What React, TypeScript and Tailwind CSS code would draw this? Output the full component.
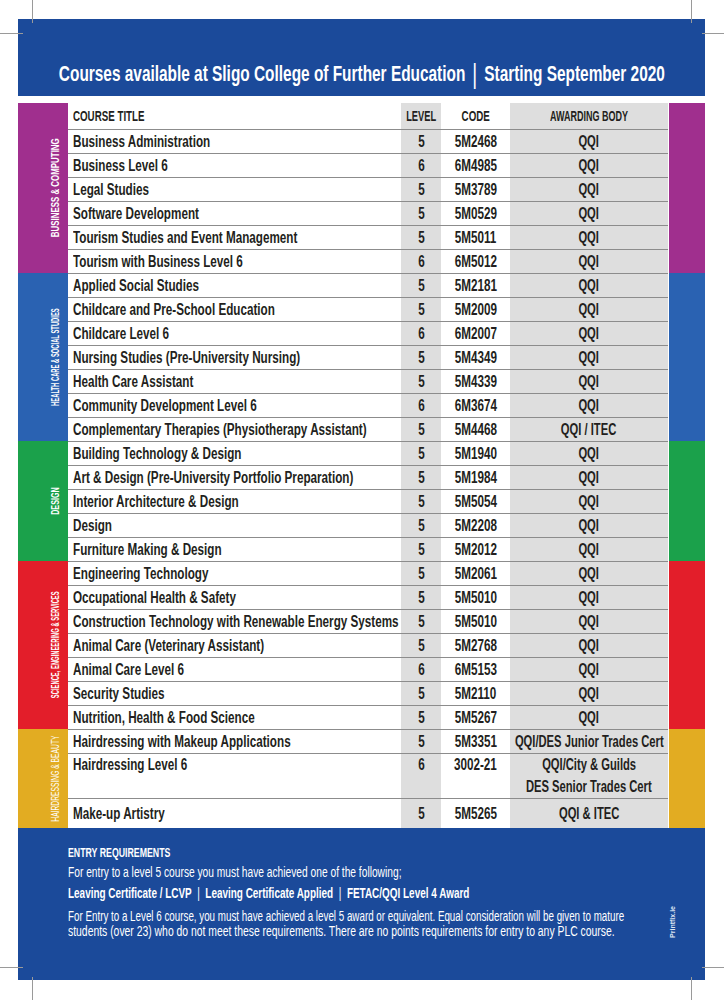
import React from "react";

type Course = {
  title: string;
  level: string;
  code: string;
  body: string[];
  tall?: boolean;
  last?: boolean;
};

type Group = {
  label: string;
  bar: string;
  span: string;
  labelClass: string;
  courses: Course[];
};

const qqi = ["QQI"];

const groups: Group[] = [
  {
    label: "BUSINESS & COMPUTING",
    bar: "bg-[#a02f8e]",
    span: "row-span-7",
    labelClass: "font-bold scale-y-[0.72]",
    courses: [
      { title: "Business Administration", level: "5", code: "5M2468", body: qqi },
      { title: "Business Level 6", level: "6", code: "6M4985", body: qqi },
      { title: "Legal Studies", level: "5", code: "5M3789", body: qqi },
      { title: "Software Development", level: "5", code: "5M0529", body: qqi },
      { title: "Tourism Studies and Event Management", level: "5", code: "5M5011", body: qqi },
      { title: "Tourism with Business Level 6", level: "6", code: "6M5012", body: qqi },
    ],
  },
  {
    label: "HEALTH CARE & SOCIAL STUDIES",
    bar: "bg-[#2a62b2]",
    span: "row-span-7",
    labelClass: "font-bold scale-y-[0.53]",
    courses: [
      { title: "Applied Social Studies", level: "5", code: "5M2181", body: qqi },
      { title: "Childcare and Pre-School Education", level: "5", code: "5M2009", body: qqi },
      { title: "Childcare Level 6", level: "6", code: "6M2007", body: qqi },
      { title: "Nursing Studies (Pre-University Nursing)", level: "5", code: "5M4349", body: qqi },
      { title: "Health Care Assistant", level: "5", code: "5M4339", body: qqi },
      { title: "Community Development Level 6", level: "6", code: "6M3674", body: qqi },
      { title: "Complementary Therapies (Physiotherapy Assistant)", level: "5", code: "5M4468", body: ["QQI / ITEC"] },
    ],
  },
  {
    label: "DESIGN",
    bar: "bg-[#1ba14b]",
    span: "row-span-5",
    labelClass: "font-bold scale-y-[0.65]",
    courses: [
      { title: "Building Technology & Design", level: "5", code: "5M1940", body: qqi },
      { title: "Art & Design (Pre-University Portfolio Preparation)", level: "5", code: "5M1984", body: qqi },
      { title: "Interior Architecture & Design", level: "5", code: "5M5054", body: qqi },
      { title: "Design", level: "5", code: "5M2208", body: qqi },
      { title: "Furniture Making & Design", level: "5", code: "5M2012", body: qqi },
    ],
  },
  {
    label: "SCIENCE, ENGINEERING & SERVICES",
    bar: "bg-[#e31e2a]",
    span: "row-span-7",
    labelClass: "font-bold scale-y-[0.53]",
    courses: [
      { title: "Engineering Technology", level: "5", code: "5M2061", body: qqi },
      { title: "Occupational Health & Safety", level: "5", code: "5M5010", body: qqi },
      { title: "Construction Technology with Renewable Energy Systems", level: "5", code: "5M5010", body: qqi },
      { title: "Animal Care (Veterinary Assistant)", level: "5", code: "5M2768", body: qqi },
      { title: "Animal Care Level 6", level: "6", code: "6M5153", body: qqi },
      { title: "Security Studies", level: "5", code: "5M2110", body: qqi },
      { title: "Nutrition, Health & Food Science", level: "5", code: "5M5267", body: qqi },
    ],
  },
  {
    label: "HAIRDRESSING & BEAUTY",
    bar: "bg-[#e2ac22]",
    span: "row-span-3",
    labelClass: "font-normal scale-y-[0.61] text-[#fbf1d6]",
    courses: [
      { title: "Hairdressing with Makeup Applications", level: "5", code: "5M3351", body: ["QQI/DES Junior Trades Cert"] },
      { title: "Hairdressing Level 6", level: "6", code: "3002-21", body: ["QQI/City & Guilds", "DES Senior Trades Cert"], tall: true },
      { title: "Make-up Artistry", level: "5", code: "5M5265", body: ["QQI & ITEC"], last: true },
    ],
  },
];

const CourseRow = ({ course }: { course: Course }) => {
  const height = course.tall ? "h-[45px]" : course.last ? "h-[30px]" : "h-6";
  const align = course.tall ? "items-start" : "items-center";
  const justify = course.tall ? "justify-start" : "justify-center";
  return (
    <div className={`col-start-2 grid grid-cols-[333px_40px_69px_158px] border-t border-[#8c8c8c] text-[16px] font-bold text-[#231f20] leading-[22px] ${height}`}>
      <div className={`h-full pl-[5px] flex whitespace-nowrap ${align}`}>
        <span className="inline-block origin-left scale-x-[0.73]">{course.title}</span>
      </div>
      <div className={`h-full bg-[#dedede] flex justify-center ${align}`}>
        <span className="inline-block scale-x-[0.73]">{course.level}</span>
      </div>
      <div className={`h-full flex justify-center ${align}`}>
        <span className="inline-block scale-x-[0.73] whitespace-nowrap">{course.code}</span>
      </div>
      <div className={`h-full bg-[#dedede] flex flex-col items-center whitespace-nowrap ${justify}`}>
        {course.body.map((b) => (
          <span key={b} className="inline-block scale-x-[0.7]">
            {b}
          </span>
        ))}
      </div>
    </div>
  );
};

const App = () => {
  return (
    <div className="relative w-[724px] h-[1000px] bg-white pt-[19px] pl-[18px] font-['Liberation_Sans',Arial,sans-serif]">
      {/* crop marks */}
      <div className="absolute left-[32px] top-0 w-px h-[23px] bg-[#9a9a9a]" />
      <div className="absolute left-0 top-[33px] w-[23px] h-px bg-[#9a9a9a]" />
      <div className="absolute left-[691px] top-0 w-px h-[23px] bg-[#9a9a9a]" />
      <div className="absolute left-[702px] top-[33px] w-[22px] h-px bg-[#9a9a9a]" />
      <div className="absolute left-[32px] top-[977px] w-px h-[23px] bg-[#9a9a9a]" />
      <div className="absolute left-0 top-[967px] w-[23px] h-px bg-[#9a9a9a]" />
      <div className="absolute left-[691px] top-[977px] w-px h-[23px] bg-[#9a9a9a]" />
      <div className="absolute left-[702px] top-[967px] w-[22px] h-px bg-[#9a9a9a]" />

      <div className="w-[687px]">
        <div className="h-[77px] bg-[#1b4a9a] pt-[31px] flex items-center justify-center text-white whitespace-nowrap">
          <span className="inline-block scale-x-[0.7] text-[22px] font-bold">
            Courses available at Sligo College of Further Education
            <span className="mx-[10px] font-normal text-[27px] leading-none align-[-2px]">|</span>
            Starting September 2020
          </span>
        </div>

        <div className="mt-[7px] grid grid-cols-[50px_600px_1px_36px] grid-flow-row-dense">
          {groups.map((g, gi) => (
            <React.Fragment key={g.label}>
              <div className={`col-start-1 ${g.span} ${g.bar} flex items-center pl-[32px]`}>
                <div className="h-0 flex items-center">
                  <span
                    className={`[writing-mode:vertical-rl] rotate-180 whitespace-nowrap text-white text-[11px] leading-[11px] ${g.labelClass}`}
                  >
                    {g.label}
                  </span>
                </div>
              </div>
              <div className={`col-start-4 ${g.span} ${g.bar}`} />
              {gi === 0 && (
                <div className="col-start-2 grid grid-cols-[333px_40px_69px_158px] h-[26px] text-[15px] font-bold text-[#231f20] whitespace-nowrap">
                  <div className="pl-[5px] flex items-center">
                    <span className="inline-block origin-left scale-x-[0.65]">COURSE TITLE</span>
                  </div>
                  <div className="bg-[#dedede] flex items-center justify-center">
                    <span className="inline-block scale-x-[0.62]">LEVEL</span>
                  </div>
                  <div className="flex items-center justify-center">
                    <span className="inline-block scale-x-[0.65]">CODE</span>
                  </div>
                  <div className="bg-[#dedede] flex items-center justify-center">
                    <span className="inline-block scale-x-[0.6]">AWARDING BODY</span>
                  </div>
                </div>
              )}
              {g.courses.map((c) => (
                <CourseRow key={c.title} course={c} />
              ))}
            </React.Fragment>
          ))}
        </div>

        <div className="h-[152px] bg-[#1b4a9a] text-white pl-[50px] pt-[16px] flex">
          <div className="flex-1 min-w-0 text-[14px] whitespace-nowrap">
            <div className="origin-left scale-x-[0.65] text-[13.5px] font-bold leading-[18px]">ENTRY REQUIREMENTS</div>
            <div className="origin-left scale-x-[0.73] leading-[20px]">
              For entry to a level 5 course you must have achieved one of the following;
            </div>
            <div className="origin-left scale-x-[0.71] font-bold leading-[22px]">
              Leaving Certificate / LCVP <span className="font-normal mx-[4px]">|</span> Leaving Certificate Applied{" "}
              <span className="font-normal mx-[4px]">|</span> FETAC/QQI Level 4 Award
            </div>
            <div className="origin-left scale-x-[0.7] leading-[15px] mt-[5px]">
              For Entry to a Level 6 course, you must have achieved a level 5 award or equivalent. Equal consideration will be given to mature
            </div>
            <div className="origin-left scale-x-[0.742] leading-[15px]">
              students (over 23) who do not meet these requirements. There are no points requirements for entry to any PLC course.
            </div>
          </div>
          <div className="w-[16px] mr-[24px] flex items-start justify-center pt-[62px]">
            <span className="[writing-mode:vertical-rl] rotate-180 text-[7px] leading-[8px] font-bold text-[#dfe6f3] whitespace-nowrap">
              Printfix.ie
            </span>
          </div>
        </div>
      </div>
    </div>
  );
};

export default App;
